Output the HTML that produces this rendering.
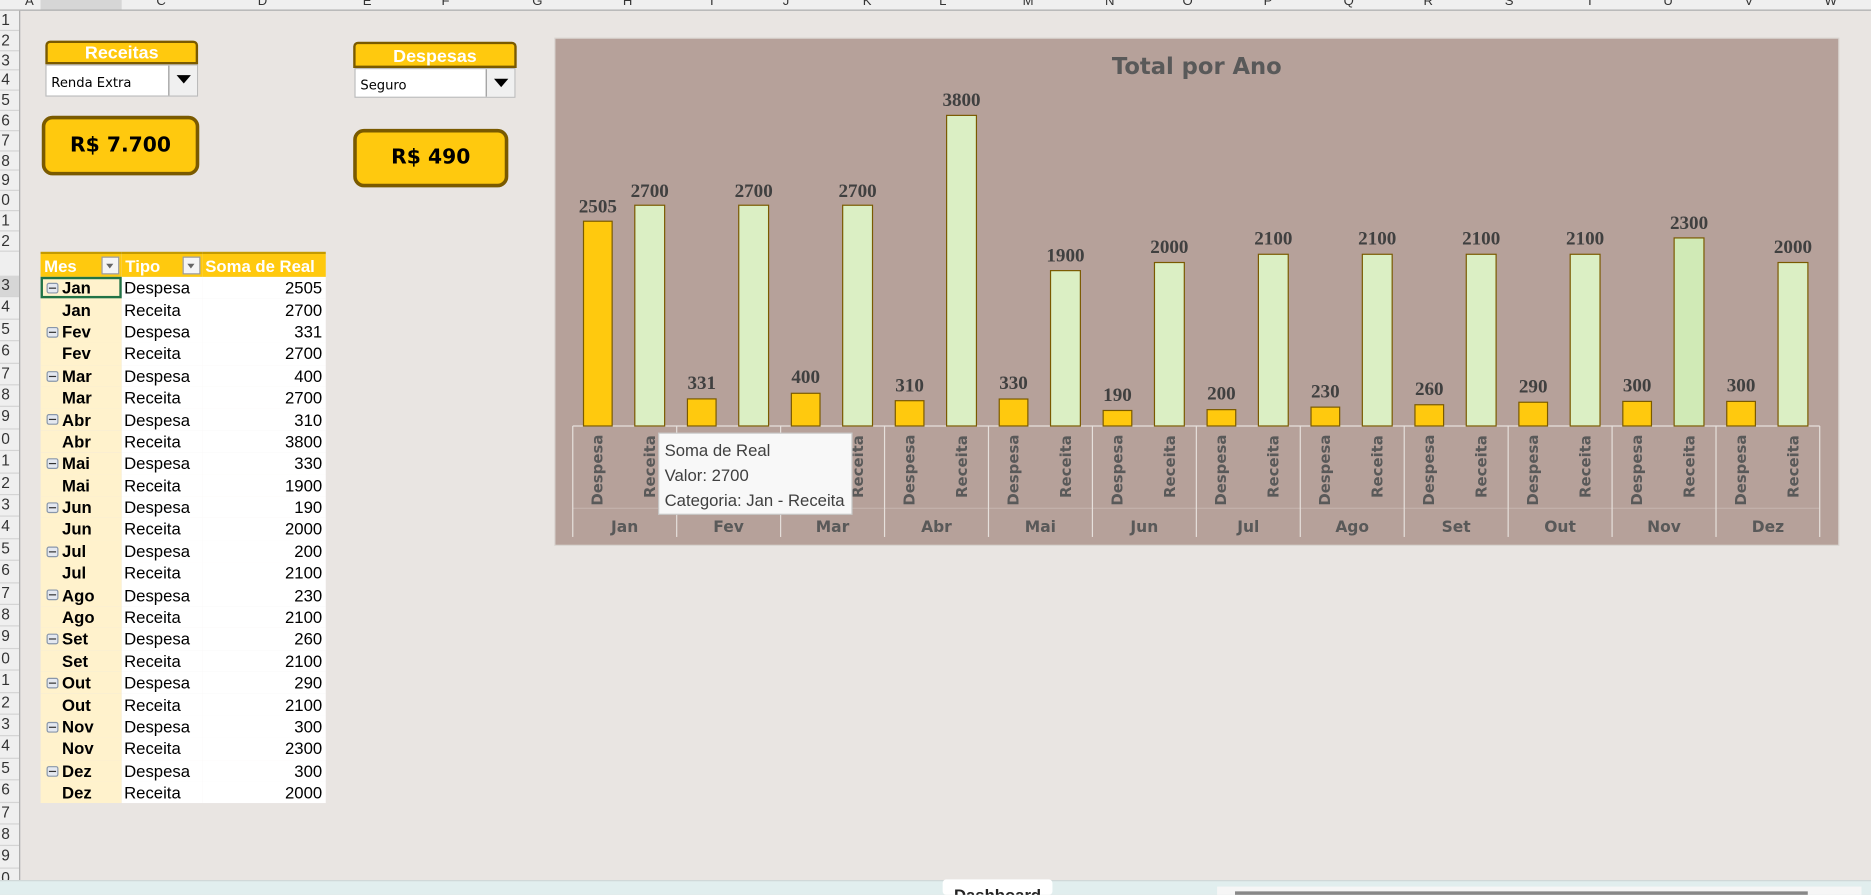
<!DOCTYPE html>
<html><head><meta charset="utf-8">
<style>
html,body{margin:0;padding:0;width:1871px;height:895px;overflow:hidden;background:#e9e5e2;}
#w{position:absolute;left:0;top:0;width:1568px;height:750px;transform:scale(1.19325);transform-origin:0 0;font-family:"Liberation Sans",sans-serif;}
.abs{position:absolute;}
.hdr{position:absolute;left:0;top:0;width:1568px;height:8px;background:#efefef;border-bottom:1px solid #a9a9a9;overflow:hidden;}
.hdr span{position:absolute;top:-5px;font-size:11px;color:#333;}
.rown{position:absolute;left:0;top:9px;width:16px;height:729px;background:#efefef;border-right:1px solid #a9a9a9;overflow:hidden;font-size:13px;color:#333;}
.rown div{position:absolute;left:0;width:16px;padding-left:1px;border-bottom:1px solid #d4d4d4;box-sizing:border-box;}
.ybox{position:absolute;background:#ffc90e;border:2.5px solid #7a5a00;box-sizing:border-box;}
.ttl{color:#fff;font-weight:bold;text-align:center;font-size:15px;line-height:17px;border-radius:4px 4px 0 0;}
.dd{position:absolute;background:#fff;border:1px solid #bbb;box-sizing:border-box;font-size:11px;font-family:"DejaVu Sans",sans-serif;}
.dd b{position:absolute;right:0;top:0;width:24px;height:100%;background:#f0f0f0;border-left:1px solid #999;box-sizing:border-box;}
.dd b:after{content:"";position:absolute;left:6px;top:8px;border-left:6px solid transparent;border-right:6px solid transparent;border-top:7px solid #000;}
.big{border-radius:9px;border-width:3px;font-weight:bold;font-size:17px;text-align:center;font-family:"DejaVu Sans",sans-serif;color:#000;}
table{position:absolute;left:34px;top:211px;border-collapse:collapse;font-size:14px;}
td{height:18.4px;padding:0;line-height:18px;}
td.m{width:68px;background:#fff2cc;font-weight:bold;padding-left:18px;box-sizing:border-box;position:relative;}
td.m i{position:absolute;left:5px;top:5px;width:8px;height:7px;border:1px solid #8896aa;border-radius:2px;background:#e4e8f0;}
td.m i:after{content:"";position:absolute;left:1px;top:3px;width:6px;height:1px;background:#333;}
td.t{width:68px;background:#fff;padding-left:2px;box-sizing:border-box;}
td.v{width:103px;background:#fff;text-align:right;padding-right:3px;box-sizing:border-box;}
th{background:#ffc90e;color:#fff;text-align:left;font-size:14px;height:19px;padding:0 0 0 3px;border-top:2px solid #c49a00;position:relative;}
th i{position:absolute;right:2px;top:2px;width:13px;height:13px;background:#f4f4f4;border:1px solid #999;}
th i:after{content:"";position:absolute;left:3px;top:5px;border-left:3.5px solid transparent;border-right:3.5px solid transparent;border-top:4px solid #666;}
</style></head><body><div id="w">
<div class="hdr">
<span style="left:21px">A</span><span style="left:64px">B</span><span style="left:131px">C</span><span style="left:216px">D</span><span style="left:304px">E</span><span style="left:370px">F</span><span style="left:446px">G</span><span style="left:522px">H</span><span style="left:595px">I</span><span style="left:656px">J</span><span style="left:723px">K</span><span style="left:787px">L</span><span style="left:857px">M</span><span style="left:926px">N</span><span style="left:991px">O</span><span style="left:1059px">P</span><span style="left:1126px">Q</span><span style="left:1193px">R</span><span style="left:1261px">S</span><span style="left:1329px">T</span><span style="left:1394px">U</span><span style="left:1462px">V</span><span style="left:1529px">W</span>
<div class="abs" style="left:34px;top:0;width:68px;height:8px;background:#d6d6d6;border-bottom:2px solid #217346"></div>
</div>
<div class="rown">
<div style="top:0;height:16.8px">1</div><div style="top:16.8px;height:16.8px">2</div><div style="top:33.6px;height:16.8px">3</div><div style="top:50.4px;height:16.8px">4</div><div style="top:67.2px;height:16.8px">5</div><div style="top:84px;height:16.8px">6</div><div style="top:100.8px;height:16.8px">7</div><div style="top:117.6px;height:16.8px">8</div><div style="top:134.4px;height:16.8px">9</div><div style="top:151.2px;height:16.8px">0</div><div style="top:168px;height:16.8px">1</div><div style="top:184.8px;height:17.2px">2</div>
<div style="top:222px;height:18.4px;background:#d6d6d6">3</div><div style="top:240.4px;height:18.4px">4</div><div style="top:258.8px;height:18.4px">5</div><div style="top:277.2px;height:18.4px">6</div><div style="top:295.6px;height:18.4px">7</div><div style="top:314px;height:18.4px">8</div><div style="top:332.4px;height:18.4px">9</div><div style="top:350.8px;height:18.4px">0</div><div style="top:369.2px;height:18.4px">1</div><div style="top:387.6px;height:18.4px">2</div><div style="top:406px;height:18.4px">3</div><div style="top:424.4px;height:18.4px">4</div><div style="top:442.8px;height:18.4px">5</div><div style="top:461.2px;height:18.4px">6</div><div style="top:479.6px;height:18.4px">7</div><div style="top:498px;height:18.4px">8</div><div style="top:516.4px;height:18.4px">9</div><div style="top:534.8px;height:18.4px">0</div><div style="top:553.2px;height:18.4px">1</div><div style="top:571.6px;height:18.4px">2</div><div style="top:590px;height:18.4px">3</div><div style="top:608.4px;height:18.4px">4</div><div style="top:626.8px;height:18.4px">5</div><div style="top:645.2px;height:18.4px">6</div><div style="top:663.6px;height:18.4px">7</div><div style="top:682px;height:18.4px">8</div><div style="top:700.4px;height:18.4px">9</div><div style="top:718.8px;height:18.4px">0</div>
</div>

<div class="ybox ttl" style="left:38px;top:34px;width:128px;height:20px;">Receitas</div>
<div class="dd" style="left:38px;top:54px;width:128px;height:27px;padding:8px 4px;">Renda Extra<b></b></div>
<div class="ybox ttl" style="left:296px;top:35px;width:137px;height:22px;line-height:22px;">Despesas</div>
<div class="dd" style="left:297px;top:57px;width:135px;height:25px;padding:7px 4px;">Seguro<b></b></div>
<div class="ybox big" style="left:35px;top:97px;width:132px;height:50px;line-height:44px;">R$ 7.700</div>
<div class="ybox big" style="left:296px;top:108px;width:130px;height:49px;line-height:43px;">R$ 490</div>

<table>
<tr><th style="width:65px">Mes<i></i></th><th style="width:65px">Tipo<i></i></th><th style="width:100px;padding-left:2px">Soma de Real</th></tr>
<tr><td class="m" style="outline:2px solid #217346;outline-offset:-2px"><i></i>Jan</td><td class="t">Despesa</td><td class="v">2505</td></tr>
<tr><td class="m">Jan</td><td class="t">Receita</td><td class="v">2700</td></tr>
<tr><td class="m"><i></i>Fev</td><td class="t">Despesa</td><td class="v">331</td></tr>
<tr><td class="m">Fev</td><td class="t">Receita</td><td class="v">2700</td></tr>
<tr><td class="m"><i></i>Mar</td><td class="t">Despesa</td><td class="v">400</td></tr>
<tr><td class="m">Mar</td><td class="t">Receita</td><td class="v">2700</td></tr>
<tr><td class="m"><i></i>Abr</td><td class="t">Despesa</td><td class="v">310</td></tr>
<tr><td class="m">Abr</td><td class="t">Receita</td><td class="v">3800</td></tr>
<tr><td class="m"><i></i>Mai</td><td class="t">Despesa</td><td class="v">330</td></tr>
<tr><td class="m">Mai</td><td class="t">Receita</td><td class="v">1900</td></tr>
<tr><td class="m"><i></i>Jun</td><td class="t">Despesa</td><td class="v">190</td></tr>
<tr><td class="m">Jun</td><td class="t">Receita</td><td class="v">2000</td></tr>
<tr><td class="m"><i></i>Jul</td><td class="t">Despesa</td><td class="v">200</td></tr>
<tr><td class="m">Jul</td><td class="t">Receita</td><td class="v">2100</td></tr>
<tr><td class="m"><i></i>Ago</td><td class="t">Despesa</td><td class="v">230</td></tr>
<tr><td class="m">Ago</td><td class="t">Receita</td><td class="v">2100</td></tr>
<tr><td class="m"><i></i>Set</td><td class="t">Despesa</td><td class="v">260</td></tr>
<tr><td class="m">Set</td><td class="t">Receita</td><td class="v">2100</td></tr>
<tr><td class="m"><i></i>Out</td><td class="t">Despesa</td><td class="v">290</td></tr>
<tr><td class="m">Out</td><td class="t">Receita</td><td class="v">2100</td></tr>
<tr><td class="m"><i></i>Nov</td><td class="t">Despesa</td><td class="v">300</td></tr>
<tr><td class="m">Nov</td><td class="t">Receita</td><td class="v">2300</td></tr>
<tr><td class="m"><i></i>Dez</td><td class="t">Despesa</td><td class="v">300</td></tr>
<tr><td class="m">Dez</td><td class="t">Receita</td><td class="v">2000</td></tr>
</table>

<svg class="abs" style="left:0;top:0" width="1568" height="750" viewBox="0 0 1568 750">
<rect x="465" y="32" width="1076" height="425" fill="#b6a19a" stroke="#d9d4d0" stroke-width="1"/>
<text x="1003" y="62" text-anchor="middle" font-family="DejaVu Sans,sans-serif" font-weight="bold" font-size="19" fill="#595959">Total por Ano</text>
<g stroke="#e6e0dc" stroke-width="1" fill="none">
<line x1="480" y1="357" x2="1525" y2="357"/>
<line x1="480" y1="426" x2="1525" y2="426" stroke="#c4b3ad"/>
<line x1="480" y1="357" x2="480" y2="450"/><line x1="567.1" y1="357" x2="567.1" y2="450"/><line x1="654.2" y1="357" x2="654.2" y2="450"/><line x1="741.3" y1="357" x2="741.3" y2="450"/><line x1="828.4" y1="357" x2="828.4" y2="450"/><line x1="915.5" y1="357" x2="915.5" y2="450"/><line x1="1002.6" y1="357" x2="1002.6" y2="450"/><line x1="1089.7" y1="357" x2="1089.7" y2="450"/><line x1="1176.8" y1="357" x2="1176.8" y2="450"/><line x1="1263.9" y1="357" x2="1263.9" y2="450"/><line x1="1351" y1="357" x2="1351" y2="450"/><line x1="1438.1" y1="357" x2="1438.1" y2="450"/><line x1="1525" y1="357" x2="1525" y2="450"/>
</g>
<g stroke="#7a5a00" stroke-width="1">
<g fill="#ffc90e">
<rect x="489" y="185.4" width="24" height="171.6"/>
<rect x="576.1" y="334.3" width="24" height="22.7"/>
<rect x="663.2" y="329.6" width="24" height="27.4"/>
<rect x="750.3" y="335.8" width="24" height="21.2"/>
<rect x="837.4" y="334.4" width="24" height="22.6"/>
<rect x="924.5" y="344" width="24" height="13"/>
<rect x="1011.6" y="343.3" width="24" height="13.7"/>
<rect x="1098.7" y="341.2" width="24" height="15.8"/>
<rect x="1185.8" y="339.2" width="24" height="17.8"/>
<rect x="1272.9" y="337.1" width="24" height="19.9"/>
<rect x="1360" y="336.4" width="24" height="20.6"/>
<rect x="1447.1" y="336.4" width="24" height="20.6"/>
</g>
<g fill="#dbefc4">
<rect x="532" y="172" width="25" height="185"/>
<rect x="619.1" y="172" width="25" height="185"/>
<rect x="706.2" y="172" width="25" height="185"/>
<rect x="793.3" y="96.7" width="25" height="260.3"/>
<rect x="880.4" y="226.8" width="25" height="130.2"/>
<rect x="967.5" y="220" width="25" height="137"/>
<rect x="1054.6" y="213.1" width="25" height="143.9"/>
<rect x="1141.7" y="213.1" width="25" height="143.9"/>
<rect x="1228.8" y="213.1" width="25" height="143.9"/>
<rect x="1315.9" y="213.1" width="25" height="143.9"/>
<rect x="1403" y="199.4" width="25" height="157.6" fill="#d0eab6"/>
<rect x="1490.1" y="220" width="25" height="137"/>
</g>
</g>
<g font-family="Liberation Serif,serif" font-weight="bold" font-size="16" fill="#404040" text-anchor="middle">
<text x="501" y="178">2505</text><text x="544.5" y="165">2700</text>
<text x="588.1" y="326">331</text><text x="631.6" y="165">2700</text>
<text x="675.2" y="321">400</text><text x="718.7" y="165">2700</text>
<text x="762.3" y="328">310</text><text x="805.8" y="89">3800</text>
<text x="849.4" y="326">330</text><text x="892.9" y="219">1900</text>
<text x="936.5" y="336">190</text><text x="980" y="212">2000</text>
<text x="1023.6" y="335">200</text><text x="1067.1" y="205">2100</text>
<text x="1110.7" y="333">230</text><text x="1154.2" y="205">2100</text>
<text x="1197.8" y="331">260</text><text x="1241.3" y="205">2100</text>
<text x="1284.9" y="329">290</text><text x="1328.4" y="205">2100</text>
<text x="1372" y="328">300</text><text x="1415.5" y="192">2300</text>
<text x="1459.1" y="328">300</text><text x="1502.6" y="212">2000</text>
</g>
<g font-family="DejaVu Sans,sans-serif" font-weight="bold" font-size="12.5" fill="#595959" text-anchor="middle">
<text transform="translate(505,394) rotate(-90)">Despesa</text><text transform="translate(549,391) rotate(-90)">Receita</text>
<text transform="translate(592.1,394) rotate(-90)">Despesa</text><text transform="translate(636.1,391) rotate(-90)">Receita</text>
<text transform="translate(679.2,394) rotate(-90)">Despesa</text><text transform="translate(723.2,391) rotate(-90)">Receita</text>
<text transform="translate(766.3,394) rotate(-90)">Despesa</text><text transform="translate(810.3,391) rotate(-90)">Receita</text>
<text transform="translate(853.4,394) rotate(-90)">Despesa</text><text transform="translate(897.4,391) rotate(-90)">Receita</text>
<text transform="translate(940.5,394) rotate(-90)">Despesa</text><text transform="translate(984.5,391) rotate(-90)">Receita</text>
<text transform="translate(1027.6,394) rotate(-90)">Despesa</text><text transform="translate(1071.6,391) rotate(-90)">Receita</text>
<text transform="translate(1114.7,394) rotate(-90)">Despesa</text><text transform="translate(1158.7,391) rotate(-90)">Receita</text>
<text transform="translate(1201.8,394) rotate(-90)">Despesa</text><text transform="translate(1245.8,391) rotate(-90)">Receita</text>
<text transform="translate(1288.9,394) rotate(-90)">Despesa</text><text transform="translate(1332.9,391) rotate(-90)">Receita</text>
<text transform="translate(1376,394) rotate(-90)">Despesa</text><text transform="translate(1420,391) rotate(-90)">Receita</text>
<text transform="translate(1463.1,394) rotate(-90)">Despesa</text><text transform="translate(1507.1,391) rotate(-90)">Receita</text>
</g>
<g font-family="DejaVu Sans,sans-serif" font-weight="bold" font-size="13" fill="#595959" text-anchor="middle">
<text x="523.5" y="446">Jan</text><text x="610.6" y="446">Fev</text><text x="697.7" y="446">Mar</text><text x="784.8" y="446">Abr</text><text x="871.9" y="446">Mai</text><text x="959" y="446">Jun</text><text x="1046.1" y="446">Jul</text><text x="1133.2" y="446">Ago</text><text x="1220.3" y="446">Set</text><text x="1307.4" y="446">Out</text><text x="1394.5" y="446">Nov</text><text x="1481.6" y="446">Dez</text>
</g>
<rect x="552" y="363" width="162" height="68" fill="#f8f8f8" stroke="#c8c8c8"/>
<g font-family="Liberation Sans,sans-serif" font-size="14" fill="#404040">
<text x="557" y="382">Soma de Real</text><text x="557" y="403">Valor: 2700</text><text x="557" y="424">Categoria: Jan - Receita</text>
</g>
<rect x="0" y="738" width="1568" height="12" fill="#e1eeee"/>
<line x1="0" y1="738" x2="1568" y2="738" stroke="#d0d8d8"/>
<rect x="790" y="737" width="92" height="13" rx="3" fill="#fff"/>
<text x="836" y="755" text-anchor="middle" font-family="Liberation Sans,sans-serif" font-weight="bold" font-size="14" fill="#222">Dashboard</text>
<rect x="1020" y="743" width="540" height="7" fill="#f6f6f6"/>
<rect x="1035" y="747" width="480" height="3" fill="#888"/>
</svg>
</div></body></html>
